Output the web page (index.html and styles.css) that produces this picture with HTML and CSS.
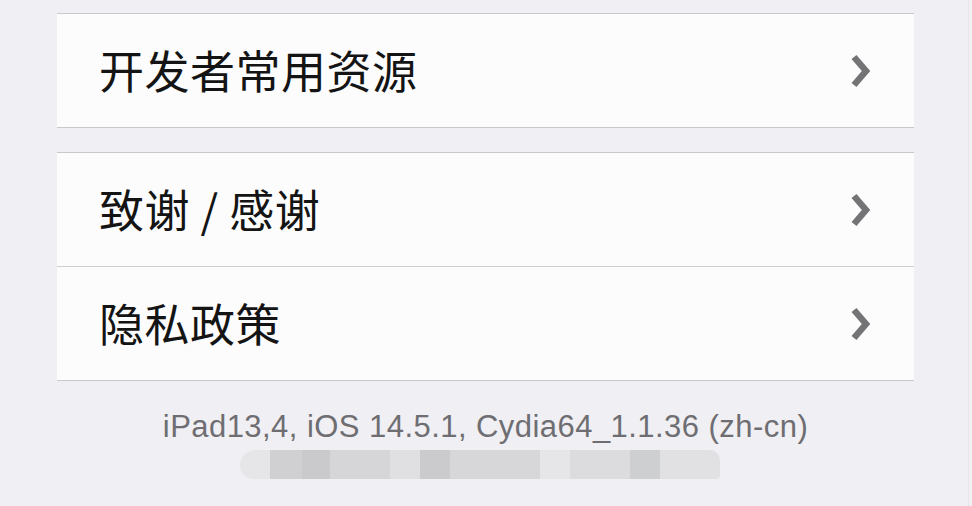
FILE: index.html
```html
<!DOCTYPE html>
<html lang="zh-CN">
<head>
    <meta charset="UTF-8">
    <meta name="viewport" content="width=device-width, initial-scale=1.0">
    <title>Cydia</title>
    <link rel="stylesheet" href="styles.css">
</head>
<body>

    <div class="page">
        <div class="settings">
            <div class="group group-first">
                <div class="row">
                    <span class="label">开发者常用资源</span>
                    <svg class="chevron" viewBox="0 0 24 38" width="24" height="38">
                        <polyline points="5,5 17,19 5,33"></polyline>
                    </svg>
                </div>
            </div>

            <div class="group">
                <div class="row">
                    <span class="label">致谢 / 感谢</span>
                    <svg class="chevron" viewBox="0 0 24 38" width="24" height="38">
                        <polyline points="5,5 17,19 5,33"></polyline>
                    </svg>
                </div>
                <div class="row">
                    <span class="label">隐私政策</span>
                    <svg class="chevron" viewBox="0 0 24 38" width="24" height="38">
                        <polyline points="5,5 17,19 5,33"></polyline>
                    </svg>
                </div>
            </div>

            <div class="footer">
                <p class="device">iPad13,4, iOS 14.5.1, Cydia64_1.1.36 (zh-cn)</p>
                <div class="blurred">
                    <span class="blk b0"></span>
                    <span class="blk b1"></span>
                    <span class="blk b2"></span>
                    <span class="blk b3"></span>
                    <span class="blk b4"></span>
                    <span class="blk b5"></span>
                    <span class="blk b6"></span>
                    <span class="blk b7"></span>
                    <span class="blk b8"></span>
                    <span class="blk b9"></span>
                    <span class="blk b10"></span>
                </div>
            </div>
        </div>
        <div class="side"></div>
    </div>

</body>
</html>
```

FILE: styles.css
```css
body {
    margin: 0;
    background-color: #f0eff3;
    font-family: "Noto Sans CJK SC", "Liberation Sans", sans-serif;
    overflow: hidden;
}
.page {
    display: flex;
    height: 506px;
}
.settings {
    width: 857px;
    margin-left: 57px;
}
.side {
    margin-left: 54px;
    flex: 1;
    border-left: 1px solid #e6e6ea;
}
.group {
    background: #fcfcfd;
    border-top: 1px solid #c9c8cc;
    border-bottom: 1px solid #c9c8cc;
    margin-top: 24px;
}
.group-first {
    margin-top: 13px;
}
.row {
    height: 113px;
    display: flex;
    align-items: center;
    justify-content: space-between;
    padding: 0 41px 0 42px;
}
.row + .row {
    border-top: 1px solid #cfced2;
}
.label {
    font-size: 45px;
    color: #141414;
    letter-spacing: 0.5px;
    margin-top: -3px;
}
.chevron polyline {
    fill: none;
    stroke: #747476;
    stroke-width: 6.5;
    stroke-linejoin: miter;
}
.footer {
    display: flex;
    flex-direction: column;
    align-items: center;
}
.device {
    margin: 28px 0 0;
    font-family: "Liberation Sans", Arial, sans-serif;
    font-size: 31px;
    line-height: 36px;
    letter-spacing: 0.45px;
    color: #6e6e72;
}
.blurred {
    display: flex;
    height: 29px;
    margin-top: 5px;
    margin-left: -11px;
}
.blk {
    display: block;
    height: 100%;
}
.b0 { width: 30px; background: #e6e6e8; border-radius: 16px 0 0 14px; }
.b1 { width: 32px; background: #d0d0d2; }
.b2 { width: 28px; background: #cacacc; }
.b3 { width: 60px; background: #d6d6d8; }
.b4 { width: 30px; background: #e0e0e2; }
.b5 { width: 30px; background: #cbcbcd; }
.b6 { width: 90px; background: #d7d7d9; }
.b7 { width: 30px; background: #e6e6e8; }
.b8 { width: 60px; background: #dcdcde; }
.b9 { width: 30px; background: #cecfd1; }
.b10 { width: 60px; background: #e1e1e3; border-radius: 0 10px 4px 0; }
```
